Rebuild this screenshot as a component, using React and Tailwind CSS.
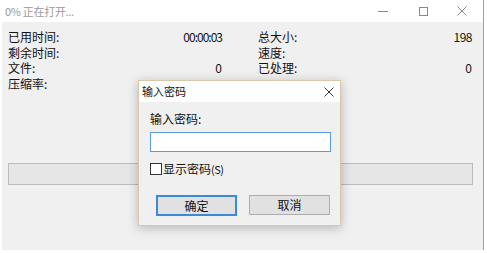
export default function App() {
  const font = { fontFamily: '"Microsoft YaHei","Noto Sans CJK SC",sans-serif' };
  return (
    <div className="relative w-[487px] h-[253px] bg-white overflow-hidden text-[12px] text-[#111]" style={font}>
      <div className="flex h-[250px] w-[484px] flex-col border-r border-[#a0a0a0] pl-[2px]">
        {/* title bar */}
        <div className="flex h-[22px] items-center bg-white">
          <div className="pl-[3px] text-[11px] tracking-[-0.3px] text-[#9a9a9a] leading-none">0% 正在打开...</div>
          <div className="ml-auto flex h-full items-center">
            <div className="flex w-[40px] justify-center">
              <div className="h-px w-[10px] bg-[#888]" />
            </div>
            <div className="flex w-[40px] justify-center">
              <div className="h-[9px] w-[9px] border border-[#888]" />
            </div>
            <div className="flex w-[40px] justify-center pr-[2px]">
              <svg width="10" height="10" viewBox="0 0 10 10">
                <path d="M0.5 0.5L9.5 9.5M9.5 0.5L0.5 9.5" stroke="#888" strokeWidth="1" />
              </svg>
            </div>
          </div>
        </div>
        {/* content */}
        <div className="flex flex-1 flex-col bg-[#f0f0f0] pl-[6px] pt-[7px]">
          <div className="flex gap-[36px] leading-[15.5px]">
            <div className="flex w-[214px] flex-col">
              <div className="flex justify-between"><span>已用时间:</span><span className="tracking-[-1px]">00:00:03</span></div>
              <div className="flex justify-between"><span>剩余时间:</span><span></span></div>
              <div className="flex justify-between"><span>文件:</span><span>0</span></div>
              <div className="flex justify-between"><span>压缩率:</span><span></span></div>
            </div>
            <div className="flex w-[214px] flex-col">
              <div className="flex justify-between"><span>总大小:</span><span className="tracking-[-0.5px]">198</span></div>
              <div className="flex justify-between"><span>速度:</span><span></span></div>
              <div className="flex justify-between"><span>已处理:</span><span>0</span></div>
              <div className="flex justify-between"><span className="pt-[2px]">压缩后大小:</span><span></span></div>
            </div>
          </div>
          <div className="mt-[70px] h-[22px] w-[465px] border border-[#bcbcbc] bg-[#e6e6e6]" />
        </div>
      </div>

      {/* dialog */}
      <div className="absolute left-[138px] top-[80px] flex h-[146px] w-[203px] flex-col border border-[#d9c7a8] bg-[#f0f0f0] shadow-[0_2px_10px_rgba(0,0,0,0.25)]">
        <div className="flex h-[21px] items-center bg-white pl-[3px] pr-[6px]">
          <span className="text-[11px]">输入密码</span>
          <svg className="ml-auto" width="10" height="10" viewBox="0 0 10 10">
            <path d="M0.5 0.5L9.5 9.5M9.5 0.5L0.5 9.5" stroke="#333" strokeWidth="1" />
          </svg>
        </div>
        <div className="flex flex-col pl-[11px] pr-[9px]">
          <div className="mt-[9px] leading-[16px]">输入密码:</div>
          <div className="mt-[5px] h-[20px] w-[181px] border border-[#5b9bd5] bg-white" />
          <div className="mt-[10px] flex items-center leading-[14px]">
            <div className="h-[12px] w-[12px] border border-[#333] bg-white" />
            <span className="ml-[1px]">显示密码<span className="text-[11px] tracking-[-0.5px]">(S)</span></span>
          </div>
          <div className="mt-[19px] flex gap-[12px] pl-[6px]">
            <div className="flex h-[21px] w-[81px] items-center justify-center border-2 border-[#3a8ad6] bg-[#e1e1e1]">确定</div>
            <div className="flex h-[20px] w-[81px] items-center justify-center border border-[#adadad] bg-[#e1e1e1]">取消</div>
          </div>
        </div>
      </div>
    </div>
  );
}
